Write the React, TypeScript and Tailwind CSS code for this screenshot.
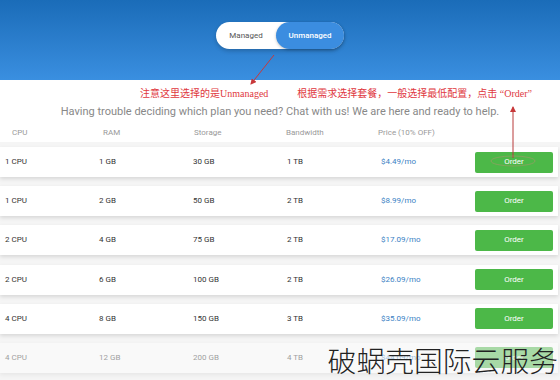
import React from "react";

interface Plan {
  cpu: string;
  ram: string;
  storage: string;
  bandwidth: string;
  price: string;
}

const plans: Plan[] = [
  { cpu: "1 CPU", ram: "1 GB", storage: "30 GB", bandwidth: "1 TB", price: "$4.49/mo" },
  { cpu: "1 CPU", ram: "2 GB", storage: "50 GB", bandwidth: "2 TB", price: "$8.99/mo" },
  { cpu: "2 CPU", ram: "4 GB", storage: "75 GB", bandwidth: "2 TB", price: "$17.09/mo" },
  { cpu: "2 CPU", ram: "6 GB", storage: "100 GB", bandwidth: "2 TB", price: "$26.09/mo" },
  { cpu: "4 CPU", ram: "8 GB", storage: "150 GB", bandwidth: "3 TB", price: "$35.09/mo" },
  { cpu: "4 CPU", ram: "12 GB", storage: "200 GB", bandwidth: "4 TB", price: "$44.09/mo" },
];

function PlanRow({ plan, faded }: { plan: Plan; faded?: boolean }) {
  return (
    <div
      className={`grid grid-cols-[94px_94px_94px_94px_94px_78px] items-center h-[30px] pl-[5px] bg-white shadow-[0_2px_4px_rgba(0,0,0,0.12)] text-[8px] text-[#333] ${
        faded ? "opacity-45" : ""
      }`}
    >
      <span>{plan.cpu}</span>
      <span>{plan.ram}</span>
      <span>{plan.storage}</span>
      <span>{plan.bandwidth}</span>
      <span className="text-[#3b7fc4]">{plan.price}</span>
      <button className="h-[21px] rounded-[2px] bg-[#4cb848] text-white text-[8px]">Order</button>
    </div>
  );
}

export default function App() {
  return (
    <div className="relative w-[560px] h-[380px] overflow-hidden bg-[#f5f5f5] font-['Roboto','Noto_Sans_CJK_SC',sans-serif]">
      <div className="h-[80px] bg-gradient-to-b from-[#1a6cb8] to-[#3a8fe0] flex justify-center pt-[22px]">
        <div className="flex h-[27px] w-[128px] rounded-full bg-white shadow-[0_2px_4px_rgba(0,0,0,0.2)] text-[8px]">
          <span className="w-[60px] flex items-center justify-center text-[#555]">Managed</span>
          <span className="flex-1 flex items-center justify-center rounded-full bg-[#3b8de0] text-white font-medium shadow-[0_1px_3px_rgba(0,0,0,0.25)]">
            Unmanaged
          </span>
        </div>
      </div>

      <div className="bg-white pt-[7px] pb-[5px]">
        <div className="flex h-[14px] text-[10px] text-[#e0383e] font-['Liberation_Serif','Noto_Sans_CJK_SC',serif] leading-[14px]">
          <span className="ml-[140px]">注意这里选择的是Unmanaged</span>
          <span className="ml-[29px]">根据需求选择套餐，一般选择最低配置，点击 “Order”</span>
        </div>
        <p className="mt-[4px] text-center text-[11px] text-[#888] leading-[14px]">
          Having trouble deciding which plan you need? Chat with us! We are here and ready to help.
        </p>
      </div>

      <div className="grid grid-cols-[91px_91px_92px_92px_92px] pl-[12px] h-[18px] items-center text-[8px] text-[#999] bg-white">
        <span>CPU</span>
        <span>RAM</span>
        <span>Storage</span>
        <span>Bandwidth</span>
        <span>Price (10% OFF)</span>
      </div>

      <div className="flex flex-col gap-[9.2px] pr-[2px] pt-[5px]">
        {plans.map((p, i) => (
          <PlanRow key={i} plan={p} faded={i === 5} />
        ))}
      </div>

      <svg className="absolute inset-0 pointer-events-none" width="560" height="380">
        <defs>
          <marker id="ah" markerWidth="6" markerHeight="6" refX="5" refY="3" orient="auto">
            <path d="M0,0 L6,3 L0,6 Z" fill="#c8383a" />
          </marker>
        </defs>
        <line x1="274" y1="55" x2="251" y2="84" stroke="#c8383a" strokeWidth="1" markerEnd="url(#ah)" />
        <line x1="513" y1="158" x2="513" y2="107" stroke="#b83a3a" strokeWidth="1" markerEnd="url(#ah)" />
        <ellipse cx="513" cy="161" rx="22" ry="5" fill="none" stroke="#e08080" strokeWidth="0.6" opacity="0.6" />
      </svg>

      <div className="absolute right-[2px] bottom-[4px] text-[28.8px] leading-[32px] text-[#222] font-light font-['Noto_Sans_CJK_SC',sans-serif]">
        破蜗壳国际云服务
      </div>
    </div>
  );
}
